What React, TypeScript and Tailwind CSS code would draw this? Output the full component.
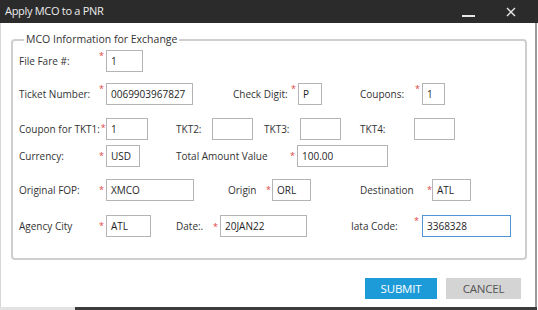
import React from 'react';

function Star({ raised }: { raised?: boolean }) {
    return (
        <span className={`text-[#e0463e] text-[9px] leading-none ${raised ? 'self-start mt-[1px]' : 'mb-[2px]'}`}>*</span>
    );
}

function Box({ value, w, focus }: { value?: string; w: string; focus?: boolean }) {
    return (
        <div
            className={`${w} h-[22px] flex items-center pl-[4px] bg-white border ${focus ? 'border-[#4f95d6]' : 'border-[#b4b4b4]'} text-[10px] text-[#1e1e1e]`}
        >
            {value}
        </div>
    );
}

export default function App() {
    return (
        <div className="w-[538px] h-[310px] bg-white flex flex-col font-['Open_Sans',sans-serif] text-[#333]">
            {/* title bar */}
            <div className="h-[23px] bg-[#2b2b2b] flex items-center pl-[5px] pr-[22px] text-[#ececec]">
                <span className="text-[11px] tracking-[-0.3px]">Apply MCO to a PNR</span>
                <div className="ml-auto flex items-center gap-[31px]">
                    <div className="w-[13px] h-[2px] bg-[#e6e6e6] mt-[9px]" />
                    <svg width="10" height="10" viewBox="0 0 10 10" className="mt-[1px]">
                        <path d="M1 1 L9 9 M9 1 L1 9" stroke="#e6e6e6" strokeWidth="1.4" />
                    </svg>
                </div>
            </div>

            <div className="w-[537px] flex-1 flex flex-col border-l border-l-[#d6d6d6] border-r-2 border-r-[#9a9a9a]">
                <fieldset className="ml-[10px] mr-[8px] mt-[11px] h-[226px] border-2 border-[#cfcfcf] rounded-[4px] pl-[6px]">
                    <legend className="ml-[5px] px-[2px] text-[10.5px] leading-[11px] text-[#333]">MCO Information for Exchange</legend>

                    <div className="flex flex-col text-[10px] text-[#333]">
                        {/* row 1 */}
                        <div className="flex items-center mt-[5px]">
                            <span className="w-[80px]">File Fare #:</span>
                            <span className="w-[7px] flex self-stretch"><Star raised /></span>
                            <Box value="1" w="w-[37px]" />
                        </div>

                        {/* row 2 */}
                        <div className="flex items-center mt-[11px]">
                            <span className="w-[80px]">Ticket Number:</span>
                            <span className="w-[7px] flex self-stretch"><Star raised /></span>
                            <Box value="0069903967827" w="w-[87px]" />
                            <span className="ml-[40px] w-[58px]">Check Digit:</span>
                            <span className="w-[7px] flex self-stretch"><Star raised /></span>
                            <Box value="P" w="w-[24px]" />
                            <span className="ml-[38px] w-[55px]">Coupons:</span>
                            <span className="w-[7px] flex self-stretch"><Star raised /></span>
                            <Box value="1" w="w-[23px]" />
                        </div>

                        {/* row 3 */}
                        <div className="flex items-center mt-[13px]">
                            <span className="w-[87px] flex items-center">
                                Coupon for TKT1:
                                <span className="self-start ml-[1px] -mt-[2px]"><Star /></span>
                            </span>
                            <Box value="1" w="w-[42px]" />
                            <span className="ml-[28px] w-[36px]">TKT2:</span>
                            <Box w="w-[41px]" />
                            <span className="ml-[11px] w-[36px]">TKT3:</span>
                            <Box w="w-[41px]" />
                            <span className="ml-[19px] w-[54px]">TKT4:</span>
                            <Box w="w-[41px]" />
                        </div>

                        {/* row 4 */}
                        <div className="flex items-center mt-[5px]">
                            <span className="w-[80px]">Currency:</span>
                            <span className="w-[7px] flex"><Star /></span>
                            <Box value="USD" w="w-[34px]" />
                            <span className="ml-[36px] w-[114px]">Total Amount Value</span>
                            <span className="w-[7px] flex"><Star /></span>
                            <Box value="100.00" w="w-[91px]" />
                        </div>

                        {/* row 5 */}
                        <div className="flex items-center mt-[12px]">
                            <span className="w-[80px]">Original FOP:</span>
                            <span className="w-[7px] flex"><Star /></span>
                            <Box value="XMCO" w="w-[88px]" />
                            <span className="ml-[34px] w-[38px]">Origin</span>
                            <span className="w-[6px] flex"><Star /></span>
                            <Box value="ORL" w="w-[39px]" />
                            <span className="ml-[49px] w-[67px]">Destination</span>
                            <span className="w-[5px] flex"><Star /></span>
                            <Box value="ATL" w="w-[39px]" />
                        </div>

                        {/* row 6 */}
                        <div className="flex items-center mt-[14px]">
                            <span className="w-[80px]">Agency City</span>
                            <span className="w-[7px] flex"><Star /></span>
                            <Box value="ATL" w="w-[45px]" />
                            <span className="ml-[25px] w-[37px]">Date:.</span>
                            <span className="w-[7px] flex"><Star raised /></span>
                            <Box value="20JAN22" w="w-[87px]" />
                            <span className="ml-[44px] w-[63px]">Iata Code:</span>
                            <span className="w-[8px] flex self-stretch"><Star raised /></span>
                            <Box value="3368328" w="w-[89px]" focus />
                        </div>
                    </div>
                </fieldset>

                <div className="flex justify-end gap-[9px] mt-[18px] mr-[14px]">
                    <button className="w-[72px] h-[21px] bg-[#1d9bd8] text-white text-[11.5px] tracking-[-0.2px]">SUBMIT</button>
                    <button className="w-[75px] h-[21px] bg-[#d4d4d4] text-[#555] text-[11.5px] tracking-[-0.2px]">CANCEL</button>
                </div>
            </div>

            {/* bottom edge */}
            <div className="h-[3px] flex">
                <div className="w-[75px] bg-[#e2e2e2]" />
                <div className="w-[462px] bg-[#3c3c3c]" />
            </div>
        </div>
    );
}
